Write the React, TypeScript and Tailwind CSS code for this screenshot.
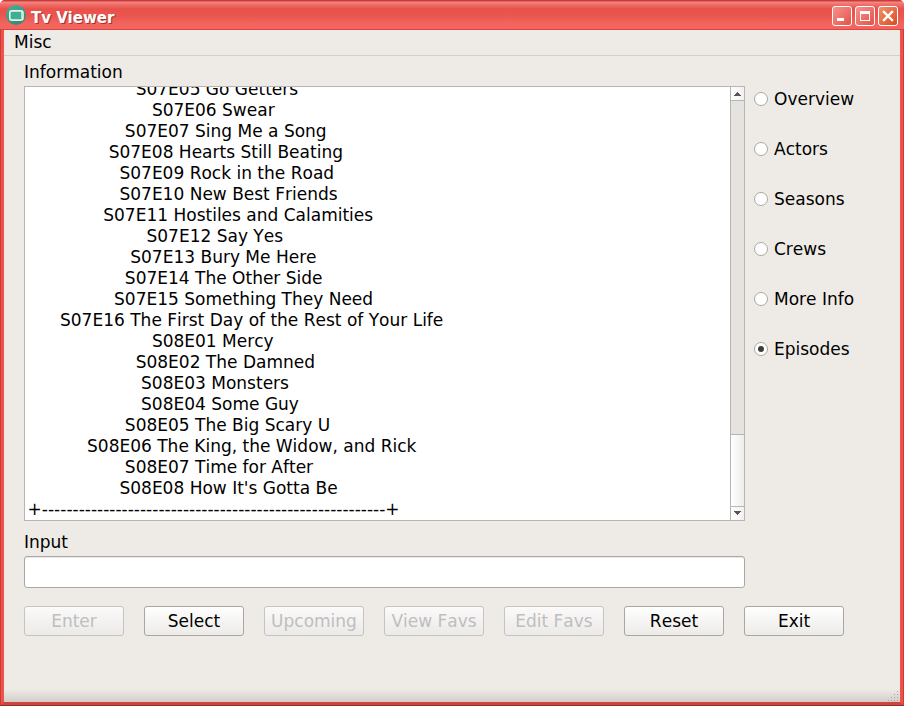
const EPISODES: [number, string][] = [
  [20, 'S07E05 Go Getters'],
  [23, 'S07E06 Swear'],
  [18, 'S07E07 Sing Me a Song'],
  [15, 'S07E08 Hearts Still Beating'],
  [17, 'S07E09 Rock in the Road'],
  [17, 'S07E10 New Best Friends'],
  [14, 'S07E11 Hostiles and Calamities'],
  [22, 'S07E12 Say Yes'],
  [19, 'S07E13 Bury Me Here'],
  [18, 'S07E14 The Other Side'],
  [16, 'S07E15 Something They Need'],
  [6, 'S07E16 The First Day of the Rest of Your Life'],
  [23, 'S08E01 Mercy'],
  [20, 'S08E02 The Damned'],
  [21, 'S08E03 Monsters'],
  [21, 'S08E04 Some Guy'],
  [18, 'S08E05 The Big Scary U'],
  [11, 'S08E06 The King, the Widow, and Rick'],
  [18, 'S08E07 Time for After'],
  [17, "S08E08 How It's Gotta Be"],
];

const VIEWS = ['Overview', 'Actors', 'Seasons', 'Crews', 'More Info', 'Episodes'];

const ACTIONS = [
  { label: 'Enter', enabled: false },
  { label: 'Select', enabled: true },
  { label: 'Upcoming', enabled: false },
  { label: 'View Favs', enabled: false },
  { label: 'Edit Favs', enabled: false },
  { label: 'Reset', enabled: true },
  { label: 'Exit', enabled: true },
];

const WINDOW_BUTTON =
  'block h-5 w-5 rounded-[3px] border border-white bg-gradient-to-br from-[#f6918b] to-[#e4504a]';

function TitleBar() {
  return (
    <header className="flex h-[30px] shrink-0 items-start border-b border-[#d9453f] bg-[linear-gradient(#c93c3a_0px,#c93c3a_1px,#f58a86_2px,#f0736d_4px,#e8514a_9px,#ea574f_16px,#f2655f_24px,#f4645e_29px)] pr-[6px] pl-[6px]">
      <svg className="mt-[5px] shrink-0" width="20" height="20" viewBox="0 0 20 20">
        <defs>
          <linearGradient id="badge" x1="0" y1="0" x2="0.6" y2="1">
            <stop offset="0" stopColor="#42b39e" />
            <stop offset="1" stopColor="#34897c" />
          </linearGradient>
        </defs>
        <circle cx="10" cy="10" r="10" fill="url(#badge)" />
        <rect x="3.8" y="5.9" width="13.2" height="9.2" rx="2.2" fill="#3fae97" stroke="#eef3dc" strokeWidth="1.6" />
        <path d="M15.6 7v6.6" stroke="#eef3dc" strokeWidth="0.8" />
      </svg>
      <h1 className="mt-[8px] ml-[5px] text-[15px] leading-[20px] font-bold text-white [text-shadow:1px_1px_0_#a8322f]">
        Tv Viewer
      </h1>
      <div className="mt-[6px] ml-auto flex gap-[3px]">
        <button className={WINDOW_BUTTON} aria-label="Minimize">
          <svg width="18" height="18" viewBox="0 0 18 18">
            <rect x="4" y="11" width="7" height="3" fill="#fff" />
          </svg>
        </button>
        <button className={WINDOW_BUTTON} aria-label="Maximize">
          <svg width="18" height="18" viewBox="0 0 18 18">
            <path fill="#fff" fillRule="evenodd" d="M4 4h10v10H4zM5 7v6h8V7z" />
          </svg>
        </button>
        <button
          className="block h-5 w-5 rounded-[3px] border border-white bg-gradient-to-br from-[#ef9068] to-[#d9481f]"
          aria-label="Close"
        >
          <svg width="18" height="18" viewBox="0 0 18 18">
            <path d="M5 5l8 8M13 5l-8 8" stroke="#fff" strokeWidth="2.4" strokeLinecap="square" />
          </svg>
        </button>
      </div>
    </header>
  );
}

function ScrollBar() {
  return (
    <div className="flex w-[14px] shrink-0 flex-col border-l border-[#b8b4b0] bg-[#e4e3df]">
      <div className="h-[14px] border-b border-[#b8b4b0] bg-gradient-to-r from-white to-[#f1f0ee] pt-[5px] pl-[2px]">
        <svg className="block" width="8" height="4" viewBox="0 0 8 4" shapeRendering="crispEdges">
          <path d="M0 4L4 0L8 4z" fill="#555" />
        </svg>
      </div>
      <div className="mt-auto h-[72px] border-t border-[#b8b4b0] bg-gradient-to-r from-white to-[#eeedeb]" />
      <div className="h-[14px] border-t border-[#b8b4b0] bg-gradient-to-r from-white to-[#f1f0ee] pt-[4px] pl-[2px]">
        <svg className="block" width="8" height="4" viewBox="0 0 8 4" shapeRendering="crispEdges">
          <path d="M0 0L4 4L8 0z" fill="#555" />
        </svg>
      </div>
    </div>
  );
}

function SizeGrip() {
  return (
    <svg className="mr-[2px] mb-[1px] ml-auto" width="10" height="10" viewBox="0 0 10 10" fill="#a8a5a1" shapeRendering="crispEdges">
      <path d="M9 0h1v1h-1zM6 3h1v1h-1zM9 3h1v1h-1zM3 6h1v1h-1zM6 6h1v1h-1zM9 6h1v1h-1zM0 9h1v1h-1zM3 9h1v1h-1zM6 9h1v1h-1zM9 9h1v1h-1z" />
    </svg>
  );
}

export default function App() {
  return (
    <div className="h-[706px] w-[904px] bg-white font-['DejaVu_Sans',sans-serif] text-[17px] leading-[21px] text-black">
      <div className="flex h-full flex-col overflow-hidden rounded-t-[5px] bg-[#f0514a]">
        <TitleBar />
        <div className="flex min-h-0 flex-1 border-x border-b border-x-[#c93c3a] border-b-[#8f302e] [font-kerning:none]">
          <div className="flex flex-1 flex-col border-x-[3px] border-b-[3px] border-x-[#f0514a] border-b-[#cf453e] bg-[#eeebe7]">
            <nav className="h-[26px] border-b border-[#d3d0cc] pt-[2px] pl-[10px]">Misc</nav>
            <main className="flex flex-1 flex-col pl-5">
              <h2 className="mt-[6px] h-6">Information</h2>
              <div className="flex">
                <section className="flex h-[435px] w-[721px] border border-[#b8b4b0] bg-white">
                  <div className="flex min-w-0 flex-1 flex-col overflow-hidden">
                    <div className="-mt-[8px] pl-[2.6px] whitespace-pre">
                      {EPISODES.map(([indent, title]) => (
                        <div key={title} className="h-[21px]">
                          {' '.repeat(indent) + title}
                        </div>
                      ))}
                      <div className="h-[21px]">{'+' + '-'.repeat(56) + '+'}</div>
                    </div>
                  </div>
                  <ScrollBar />
                </section>
                <div className="ml-[9px] flex flex-col gap-[29px] pt-[2px]">
                  {VIEWS.map((view) => (
                    <label key={view} className="flex h-[21px] items-center gap-[6px]">
                      <span className="flex h-[14px] w-[14px] items-center justify-center rounded-full border border-[#aaa7a4] bg-white">
                        {view === 'Episodes' && <span className="h-[6px] w-[6px] rounded-full bg-[#3c3c3c]" />}
                      </span>
                      <span className="pt-[2px]">{view}</span>
                    </label>
                  ))}
                </div>
              </div>
              <h2 className="mt-[11px] h-6">Input</h2>
              <div className="h-8 w-[721px] rounded-[3px] border border-[#aaa7a4] bg-white shadow-[inset_0_1px_0_#e9e8e6]" />
              <div className="mt-[18px] flex gap-5">
                {ACTIONS.map(({ label, enabled }) => (
                  <button
                    key={label}
                    disabled={!enabled}
                    className="h-[30px] w-[100px] rounded-[3px] border border-[#a9a6a3] bg-gradient-to-b from-white to-[#ecebe8] text-center whitespace-nowrap [font-kerning:none] disabled:border-[#c6c3c0] disabled:from-[#fbfafa] disabled:to-[#eceae7] disabled:text-[#bebebe]"
                  >
                    {label}
                  </button>
                ))}
              </div>
            </main>
            <footer className="flex h-[13px] items-end bg-gradient-to-b from-[#eeebe7] to-[#d2cfcb]">
              <SizeGrip />
            </footer>
          </div>
        </div>
      </div>
    </div>
  );
}
